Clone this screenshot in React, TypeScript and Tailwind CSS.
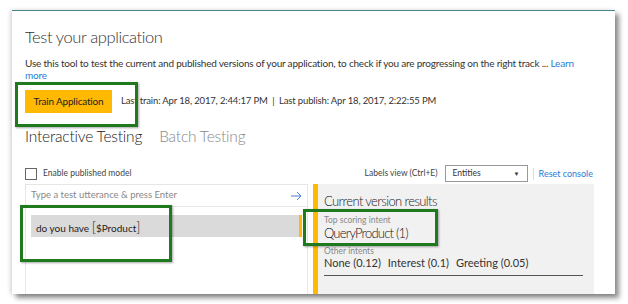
import React from "react";

const font = { fontFamily: 'Lato, "Open Sans", sans-serif' };

function Highlight({ className }: { className: string }) {
  return (
    <div
      className={`pointer-events-none absolute border-[3px] border-[#1f7a1f] shadow-[1px_1px_2px_rgba(0,0,0,0.35)] ${className}`}
    />
  );
}

export default function App() {
  return (
    <div className="relative h-[304px] w-[628px] overflow-hidden bg-white pl-[12px] pt-[10px] text-[#333]" style={font}>
      <div className="relative h-[284px] w-[603px] overflow-hidden border-t border-[#4b8791] bg-white pl-[13px] pr-[21px] shadow-[4px_4px_5px_rgba(0,0,0,0.45),-2px_0_4px_rgba(0,0,0,0.15)]">
        <h1 className="mt-[15px] text-[16.5px] font-light leading-[22px] tracking-[-0.4px] text-[#333]">
          Test your application
        </h1>
        <p className="mt-[9px] text-[10px] leading-[12px] tracking-[-0.2px]">
          Use this tool to test the current and published versions of your application, to check if you are
          progressing on the right track ... <span className="text-[#2b7bd5]">Learn</span>
          <br />
          <span className="text-[#2b7bd5]">more</span>
        </p>

        <div className="mt-[9px] flex items-center">
          <button className="h-[23px] w-[87px] bg-[#ffb900] text-[10px] tracking-[-0.2px] text-[#222]">
            Train Application
          </button>
          <span className="ml-[9px] text-[9.5px] tracking-[-0.15px]">
            Last train: Apr 18, 2017, 2:44:17 PM &nbsp;|&nbsp; Last publish: Apr 18, 2017, 2:22:55 PM
          </span>
        </div>

        <div className="mt-[12px] flex items-baseline gap-[17px] text-[15.5px] font-light leading-[22px] tracking-[-0.2px]">
          <span className="text-[#222]">Interactive Testing</span>
          <span className="text-[#888]">Batch Testing</span>
        </div>

        <div className="mt-[18px] flex h-[17px] items-center">
          <div className="h-[12px] w-[12px] border border-[#666]" />
          <span className="ml-[6px] text-[8.5px] text-[#444]">Enable published model</span>
          <span className="ml-auto text-[8.5px] text-[#444]">Labels view (Ctrl+E)</span>
          <div className="ml-[7px] flex h-[17px] w-[83px] items-center justify-between border border-[#999] px-[7px] text-[8.5px]">
            <span>Entities</span>
            <span className="text-[6px]">▼</span>
          </div>
          <div className="ml-[5px] h-[12px] w-px bg-[#ddd]" />
          <span className="ml-[5px] mr-[1px] text-[9px] text-[#2b7bd5]">Reset console</span>
        </div>

        <div className="mt-[2px] flex h-[120px]">
          <div className="w-[283px] border border-[#e6e6e6]">
            <div className="flex h-[22px] items-center justify-between border-b border-[#e6e6e6] px-[5px] text-[9.5px] text-[#888]">
              <span>Type a test utterance &amp; press Enter</span>
              <svg width="11" height="10" viewBox="0 0 11 10" fill="none" stroke="#4a7fd4" strokeWidth="1">
                <path d="M0 5h10M6 1l4 4-4 4" />
              </svg>
            </div>
            <div className="mx-[5px] mt-[8px] flex h-[22px] items-center justify-between bg-[#dadada] pl-[5px] text-[10px] text-[#222]">
              <span>
                do you have <span className="text-[14px] font-light">[</span>$Product
                <span className="text-[14px] font-light">]</span>
              </span>
              <div className="h-[22px] w-[3px] bg-[#ffb900]" />
            </div>
          </div>
          <div className="ml-[5px] w-[5px] bg-[#ffb900]" />
          <div className="flex-1 bg-[#f1f1f1] px-[6px] pt-[8px]">
            <div className="text-[13px] font-light leading-[18px] tracking-[-0.6px] text-[#222]">
              Current version results
            </div>
            <div className="mt-[5px] text-[8.5px] leading-[10px] text-[#888]">Top scoring intent</div>
            <div className="text-[13px] font-light leading-[16px] tracking-[-0.8px] text-[#111]">QueryProduct (1)</div>
            <div className="mt-[5px] text-[8.5px] leading-[10px] text-[#888]">Other intents</div>
            <div className="flex gap-[7px] text-[11px] leading-[14px] text-[#333]">
              <span>None (0.12)</span>
              <span>Interest (0.1)</span>
              <span>Greeting (0.05)</span>
            </div>
            <div className="mr-[5px] mt-[5px] h-px bg-[#555]" />
          </div>
        </div>
      </div>

      <Highlight className="left-[15px] top-[82px] h-[45px] w-[123px]" />
      <Highlight className="left-[20px] top-[205px] h-[57px] w-[152px]" />
      <Highlight className="left-[303px] top-[209px] h-[37px] w-[135px]" />
    </div>
  );
}
